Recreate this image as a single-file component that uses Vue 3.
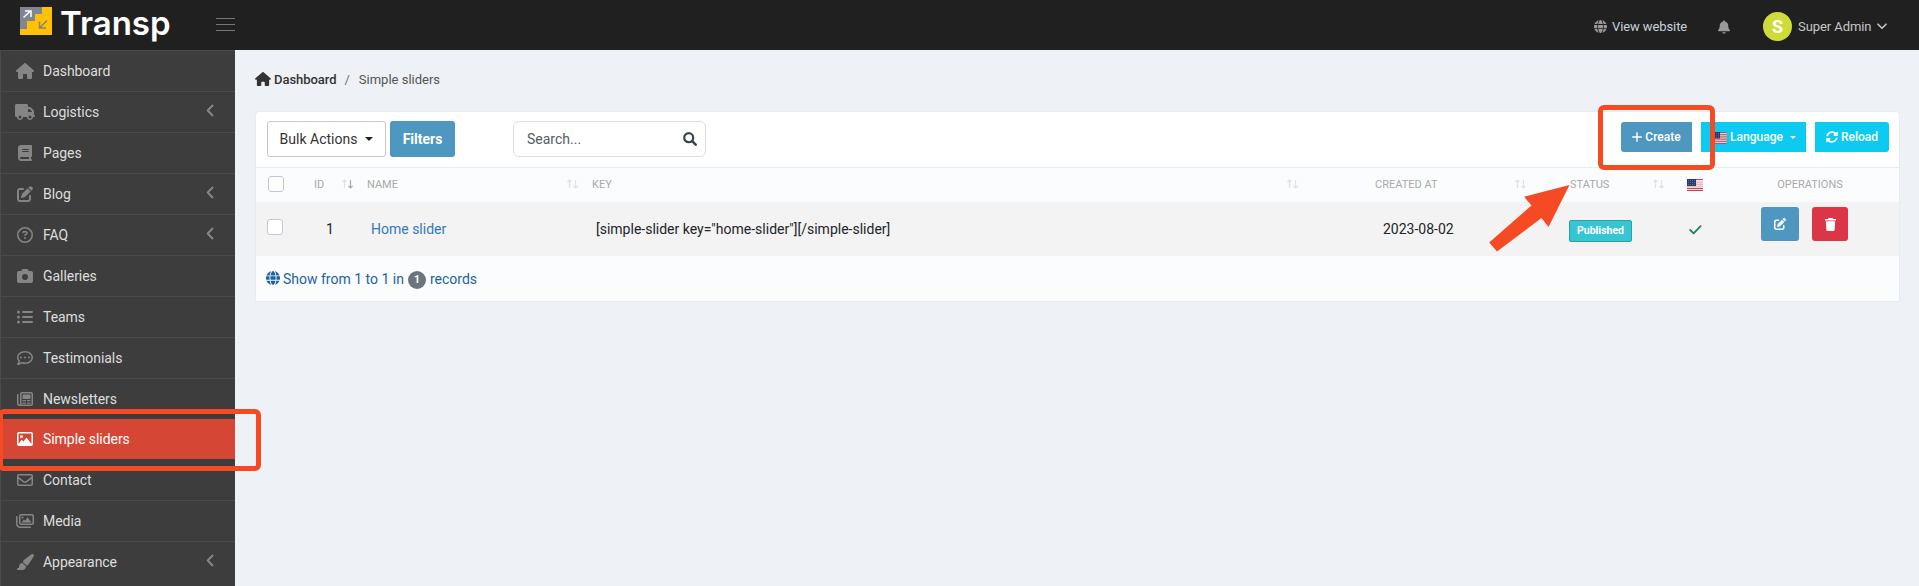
<script setup>
const icons = {
  house: [576, 'M575.8 255.5c0 18-15 32.1-32 32.1h-32l.7 160.2c0 2.7-.2 5.4-.5 8.1V472c0 22.1-17.9 40-40 40H392c-22.1 0-40-17.9-40-40V384c0-17.7-14.3-32-32-32H256c-17.7 0-32 14.3-32 32v88c0 22.1-17.9 40-40 40H104c-22.1 0-40-17.9-40-40V287.6H32c-18 0-32-14-32-32.1c0-9 3-17 10-24L266.4 8c7-7 15-8 22-8s15 2 21 7L564.8 231.5c8 7 12 15 11 24z'],
  truck: [640, 'M48 0C21.5 0 0 21.5 0 48V368c0 26.5 21.5 48 48 48H64c0 53 43 96 96 96s96-43 96-96H384c0 53 43 96 96 96s96-43 96-96h32c17.7 0 32-14.3 32-32s-14.3-32-32-32V237.3c0-17-6.7-33.3-18.7-45.3L512 114.7c-12-12-28.3-18.7-45.3-18.7H416V48c0-26.5-21.5-48-48-48H48zM416 160h50.7L544 237.3V256H416V160zM112 416a48 48 0 1 1 96 0 48 48 0 1 1 -96 0zm368-48a48 48 0 1 1 0 96 48 48 0 1 1 0-96z'],
  book: [448, 'M96 0C43 0 0 43 0 96V416c0 53 43 96 96 96H416c17.7 0 32-14.3 32-32s-14.3-32-32-32V384c17.7 0 32-14.3 32-32V32c0-17.7-14.3-32-32-32H96zm0 384H352v64H96c-17.7 0-32-14.3-32-32s14.3-32 32-32zm32-240c0-8.8 7.2-16 16-16H336c8.8 0 16 7.2 16 16s-7.2 16-16 16H144c-8.8 0-16-7.2-16-16zm16 48H336c8.8 0 16 7.2 16 16s-7.2 16-16 16H144c-8.8 0-16-7.2-16-16s7.2-16 16-16z'],
  edit: [512, 'M471.6 21.7c-21.9-21.9-57.3-21.9-79.2 0L362.3 51.7l97.9 97.9 30.1-30.1c21.9-21.9 21.9-57.3 0-79.2L471.6 21.7zm-299.2 220c-6.1 6.1-10.8 13.6-13.5 21.9l-29.6 88.8c-2.9 8.6-.6 18.1 5.8 24.6s15.9 8.7 24.6 5.8l88.8-29.6c8.2-2.7 15.7-7.4 21.9-13.5L437.7 172.3 339.7 74.3 172.4 241.7zM96 64C43 64 0 107 0 160V416c0 53 43 96 96 96H352c53 0 96-43 96-96V320c0-17.7-14.3-32-32-32s-32 14.3-32 32v96c0 17.7-14.3 32-32 32H96c-17.7 0-32-14.3-32-32V160c0-17.7 14.3-32 32-32h96c17.7 0 32-14.3 32-32s-14.3-32-32-32H96z'],
  question: [512, 'M464 256A208 208 0 1 0 48 256a208 208 0 1 0 416 0zM0 256a256 256 0 1 1 512 0A256 256 0 1 1 0 256zm169.8-90.7c7.9-22.3 29.1-37.3 52.8-37.3h58.3c34.9 0 63.1 28.3 63.1 63.1c0 22.6-12.1 43.5-31.7 54.8L280 264.4c-.2 13-10.9 23.6-24 23.6c-13.3 0-24-10.7-24-24V250.5c0-8.6 4.6-16.5 12.1-20.8l44.3-25.4c4.7-2.7 7.6-7.7 7.6-13.1c0-8.4-6.8-15.1-15.1-15.1H222.6c-3.4 0-6.4 2.1-7.5 5.3l-.4 1.2c-4.4 12.5-18.2 19-30.6 14.6s-19-18.2-14.6-30.6l.4-1.2zM224 352a32 32 0 1 1 64 0 32 32 0 1 1 -64 0z'],
  camera: [512, 'M149.1 64.8L138.7 96H64C28.7 96 0 124.7 0 160V416c0 35.3 28.7 64 64 64H448c35.3 0 64-28.7 64-64V160c0-35.3-28.7-64-64-64H373.3L362.9 64.8C356.4 45.2 338.1 32 317.4 32H194.6c-20.7 0-39 13.2-45.5 32.8zM256 192a96 96 0 1 1 0 192 96 96 0 1 1 0-192z'],
  list: [512, 'M48 48a48 48 0 1 1 0 96 48 48 0 1 1 0-96zm0 160a48 48 0 1 1 0 96 48 48 0 1 1 0-96zm0 160a48 48 0 1 1 0 96 48 48 0 1 1 0-96zM192 64H480a32 32 0 0 1 0 64H192a32 32 0 0 1 0-64zm0 160H480a32 32 0 0 1 0 64H192a32 32 0 0 1 0-64zm0 160H480a32 32 0 0 1 0 64H192a32 32 0 0 1 0-64z'],
  comment: [512, 'M256 32C397.4 32 512 125.1 512 240S397.4 448 256 448c-38 0-75-7-107-20C112 456 65 480 24 480C2 480-8 454 8 438c20-21 36-50 41-80C18 324 0 284 0 240C0 125.1 114.6 32 256 32zM256 80C141 80 48 152 48 240c0 35 15 65 38 90c14 15 13 29 8 46c-4 16-10 31-18 45c25-9 43-21 58-32c8-6 18-6 27-3c27 10 60 14 95 14c115 0 208-72 208-160S371 80 256 80zM128 208a32 32 0 1 1 0 64 32 32 0 1 1 0-64zm128 0a32 32 0 1 1 0 64 32 32 0 1 1 0-64zm128 0a32 32 0 1 1 0 64 32 32 0 1 1 0-64z', 'evenodd'],
  news: [512, 'M160 32H448C483 32 512 61 512 96V416C512 451 483 480 448 480H72C32 480 0 448 0 408V120A24 24 0 0 1 48 120V408A24 24 0 0 0 96 408V96C96 61 125 32 160 32zM160 80C151 80 144 87 144 96V408C144 416 143 424 140 432H448C457 432 464 425 464 416V96C464 87 457 80 448 80zM200 112H408A24 24 0 0 1 432 136V232A24 24 0 0 1 408 256H200A24 24 0 0 1 176 232V136A24 24 0 0 1 200 112zM176 288H288V328H176zM320 288H432V328H320zM176 368H288V408H176zM320 368H432V408H320z', 'evenodd'],
  image: [512, 'M448 80c8.8 0 16 7.2 16 16V415.8l-5-6.5-136-176c-4.5-5.9-11.6-9.3-19-9.3s-14.4 3.4-19 9.3L202 340.7l-30.5-42.7C167 291.7 159.8 288 152 288s-15 3.7-19.5 10.1l-80 112L48 416.3V96c0-8.8 7.2-16 16-16H448zM64 32C28.7 32 0 60.7 0 96V416c0 35.3 28.7 64 64 64H448c35.3 0 64-28.7 64-64V96c0-35.3-28.7-64-64-64H64zm80 192a48 48 0 1 0 0-96 48 48 0 1 0 0 96z'],
  envelope: [512, 'M64 112c-8.8 0-16 7.2-16 16v22.1L220.5 291.7c20.7 17 50.4 17 71.1 0L464 150.1V128c0-8.8-7.2-16-16-16H64zM48 212.2V384c0 8.8 7.2 16 16 16H448c8.8 0 16-7.2 16-16V212.2L322 328.8c-38.4 31.5-93.7 31.5-132 0L48 212.2zM0 128C0 92.7 28.7 64 64 64H448c35.3 0 64 28.7 64 64V384c0 35.3-28.7 64-64 64H64c-35.3 0-64-28.7-64-64V128z'],
  images: [576, 'M160 32H512C547 32 576 61 576 96V320C576 355 547 384 512 384H160C125 384 96 355 96 320V96C96 61 125 32 160 32zM160 80C151 80 144 87 144 96V320C144 329 151 336 160 336H512C521 336 528 329 528 320V96C528 87 521 80 512 80zM208 112A32 32 0 1 1 208 176A32 32 0 1 1 208 112zM176 304L254 208L294 248L368 136L496 304zM24 96A24 24 0 0 1 48 120V344C48 393 87 432 136 432H456A24 24 0 0 1 456 480H136C61 480 0 419 0 344V120A24 24 0 0 1 24 96z', 'evenodd'],
  brush: [576, 'M339.3 367.1c27.3-3.9 51.9-19.4 67.2-42.9L568.2 74.1c12.6-19.5 9.4-45.3-7.6-61.2S517.7-4.4 499.1 9.6L262.4 187.2c-24 18-38.2 46.1-38.4 76.1L339.3 367.1zm-19.6 25.4l-116-104.4C143.9 290.3 96 339.6 96 400c0 3.9 .2 7.8 .6 11.6C98.4 429.1 86.4 448 68.8 448H64c-17.7 0-32 14.3-32 32s14.3 32 32 32H208c61.9 0 112-50.1 112-112c0-2.5-.1-5-.2-7.5z'],
  globe: [512, 'M352 256c0 22.2-1.2 43.6-3.3 64H163.3c-2.2-20.4-3.3-41.8-3.3-64s1.2-43.6 3.3-64H348.7c2.2 20.4 3.3 41.8 3.3 64zm28.8-64H503.9c5.3 20.5 8.1 41.9 8.1 64s-2.8 43.5-8.1 64H380.8c2.1-20.6 3.2-42 3.2-64s-1.1-43.4-3.2-64zm112.6-32H376.7c-10-63.9-29.8-117.4-55.3-151.6c78.3 20.7 142 77.5 171.9 151.6zm-149.1 0H167.7c6.1-36.4 15.5-68.6 27-94.7c10.5-23.6 22.2-40.7 33.5-51.5C239.4 3.2 248.7 0 256 0s16.6 3.2 27.8 13.8c11.3 10.8 23 27.9 33.5 51.5c11.6 26 20.9 58.2 27 94.7zm-209 0H18.6C48.6 85.9 112.2 29.1 190.6 8.4C165.1 42.6 145.3 96.1 135.3 160zM8.1 192H131.2c-2.1 20.6-3.2 42-3.2 64s1.1 43.4 3.2 64H8.1C2.8 299.5 0 278.1 0 256s2.8-43.5 8.1-64zM194.7 446.6c-11.6-26-20.9-58.2-27-94.6H344.3c-6.1 36.4-15.5 68.6-27 94.6c-10.5 23.6-22.2 40.7-33.5 51.5C272.6 508.8 263.3 512 256 512s-16.6-3.2-27.8-13.8c-11.3-10.8-23-27.9-33.5-51.5zM135.3 352c10 63.9 29.8 117.4 55.3 151.6C112.2 482.9 48.6 426.1 18.6 352H135.3zm358.1 0c-30 74.1-93.6 130.9-171.9 151.6c25.5-34.2 45.2-87.7 55.3-151.6H493.4z']
}
const menu = [
  ['Dashboard', 'house'], ['Logistics', 'truck', true], ['Pages', 'book'], ['Blog', 'edit', true],
  ['FAQ', 'question', true], ['Galleries', 'camera'], ['Teams', 'list'], ['Testimonials', 'comment'],
  ['Newsletters', 'news'], ['Simple sliders', 'image'], ['Contact', 'envelope'], ['Media', 'images'],
  ['Appearance', 'brush', true]
]
const columns = [
  { key: 'id', label: 'ID' },
  { key: 'name', label: 'NAME' },
  { key: 'code', label: 'KEY' },
  { key: 'created', label: 'CREATED AT' },
  { key: 'status', label: 'STATUS' }
]
const stripes = [0, 2, 4, 6, 8, 10, 12]
</script>

<template>
  <div class="app">
    <header class="topbar">
      <div class="brand">
        <svg class="mark" width="32" height="28" viewBox="0 0 32 28">
          <rect width="32" height="28" fill="#ffc107" />
          <path d="M0 0H22V7H15V14H7V22H0z" fill="#808591" />
          <path d="M3.500 10.500L10.500 4M5 4H11V10" fill="none" stroke="#fff" stroke-width="1.500" />
          <path d="M27 13.500L20 20.500M19.500 14.500V21H26" fill="none" stroke="#8b8465" stroke-width="1.500" />
        </svg>
        <span class="word">Transp</span>
      </div>
      <div class="burger"><i></i><i></i><i></i></div>
      <nav class="user">
        <svg class="dim" width="13" height="13" viewBox="0 0 512 512"><path :d="icons.globe[1]" /></svg>
        <span class="site">View website</span>
        <svg class="dim bell" width="12" height="14" viewBox="0 0 448 512"><path d="M224 0c-17.700 0-32 14.300-32 32V51.200C119 66 64 130.600 64 208v18.800c0 47-17.300 92.400-48.500 127.600l-7.400 8.300c-8.400 9.400-10.400 22.900-5.300 34.400S19.400 416 32 416H416c12.600 0 24-7.400 29.200-18.900s3.100-25-5.300-34.400l-7.400-8.300C401.300 319.200 384 273.900 384 226.800V208c0-77.400-55-142-128-156.800V32c0-17.700-14.300-32-32-32zm45.300 493.300c12-12 18.700-28.300 18.700-45.300H160c0 17 6.700 33.300 18.700 45.300s28.300 18.700 45.300 18.700s33.300-6.700 45.300-18.700z" /></svg>
        <span class="avatar">S</span>
        <span class="admin">Super Admin</span>
        <svg class="down" width="10" height="7" viewBox="0 0 10 7"><path d="M1 1.200L5 5.200L9 1.200" fill="none" stroke="#c6c6c6" stroke-width="1.600" stroke-linecap="round" stroke-linejoin="round" /></svg>
      </nav>
    </header>

    <div class="body">
      <aside class="sidebar">
        <a v-for="m in menu" :key="m[0]" class="item" :class="{ active: m[0] === 'Simple sliders', after: m[0] === 'Contact' }">
          <span class="ico">
            <svg height="16" :width="icons[m[1]][0] / 32" :viewBox="`0 0 ${icons[m[1]][0]} 512`"><path :d="icons[m[1]][1]" :fill-rule="icons[m[1]][2] || 'nonzero'" /></svg>
          </span>
          <span class="label">{{ m[0] }}</span>
          <svg v-if="m[2]" class="chev" width="8" height="13" viewBox="0 0 8 13"><path d="M6.500 1.500L1.700 6.500L6.500 11.500" fill="none" stroke="#858585" stroke-width="2" stroke-linecap="round" stroke-linejoin="round" /></svg>
        </a>
      </aside>

      <main class="content">
        <div class="crumbs">
          <svg width="16" height="14" viewBox="0 0 576 512"><path :d="icons.house[1]" fill="#333" /></svg>
          <span class="home">Dashboard</span><span class="slash">/</span><span class="here">Simple sliders</span>
        </div>

        <section class="card">
          <div class="tools">
            <button class="bulk">Bulk Actions<i class="caret"></i></button>
            <button class="filters">Filters</button>
            <div class="search">
              <span>Search...</span>
              <svg width="14" height="14" viewBox="0 0 14 14"><circle cx="5.700" cy="5.700" r="4.500" fill="none" stroke="#3c4350" stroke-width="2.200" /><path d="M9.200 9.200L12.700 12.700" stroke="#3c4350" stroke-width="2.500" stroke-linecap="round" /></svg>
            </div>
            <div class="actions">
              <button class="act create">
                <svg width="10" height="10" viewBox="0 0 10 10"><path d="M5 .7V9.300M.7 5H9.300" stroke="#fff" stroke-width="1.400" stroke-linecap="round" /></svg>
                <span>Create</span>
              </button>
              <button class="act lang">
                <svg class="flag" width="16" height="12" viewBox="0 0 16 13" preserveAspectRatio="none"><rect width="16" height="13" fill="#fff" opacity=".78" /><rect v-for="y in stripes" :key="y" width="16" height="1" :y="y" fill="#c4404f" /><rect width="9" height="7" fill="#27376f" /><path d="M1 1.500H8M1 3.500H8M1 5.500H8" stroke="#8b95b8" stroke-width=".6" stroke-dasharray="1 1" /></svg>
                <span>Language</span><i class="caret small"></i>
              </button>
              <button class="act reload">
                <svg width="12" height="12" viewBox="0 0 512 512"><path fill="#fff" d="M370.720 133.280C339.458 104.008 298.888 87.962 255.848 88c-77.458.068-144.328 53.178-162.791 126.850-1.344 5.363-6.122 9.150-11.651 9.150H24.103c-7.498 0-13.194-6.807-11.807-14.176C33.933 94.924 134.813 8 256 8c66.448 0 126.791 26.136 171.315 68.685L463.030 40.970C478.149 25.851 504 36.559 504 57.941V192c0 13.255-10.745 24-24 24H345.941c-21.382 0-32.090-25.851-16.971-40.971l41.750-41.749zM32 296h134.059c21.382 0 32.090 25.851 16.971 40.971l-41.750 41.750c31.262 29.273 71.835 45.319 114.876 45.280 77.418-.070 144.315-53.144 162.787-126.849 1.344-5.363 6.122-9.150 11.651-9.150h57.304c7.498 0 13.194 6.807 11.807 14.176C478.067 417.076 377.187 504 256 504c-66.448 0-126.791-26.136-171.315-68.685L48.970 471.030C33.851 486.149 8 475.441 8 454.059V320c0-13.255 10.745-24 24-24z" /></svg>
                <span>Reload</span>
              </button>
            </div>
          </div>

          <div class="row head">
            <div class="c-check"><i class="box"></i></div>
            <div v-for="c in columns" :key="c.key" class="cell" :class="'h-' + c.key">
              <span>{{ c.label }}</span>
              <svg class="sort" width="11" height="10" viewBox="0 0 11 10"><path d="M2.500 9V1.500M.5 3L2.500 1L4.500 3" fill="none" stroke="#dfe1e3" stroke-width="1.200" /><path class="dn" d="M8.500 1V8.500M6.500 7L8.500 9L10.500 7" fill="none" stroke-width="1.200" /></svg>
            </div>
            <div class="c-flag"><svg width="16" height="12" viewBox="0 0 16 12"><rect width="16" height="12" fill="#f3d9dd" /><path d="M8 .5H16M0 9.500H16M0 11.500H16" stroke="#cf3f4d" /><path d="M8 3.500H16M8 5.500H16M0 7.500H16" stroke="#e9b9c0" /><rect width="9" height="7" fill="#27376f" /><path d="M1 1.500H8M1 3.500H8M1 5.500H8" stroke="#8b95b8" stroke-width=".6" stroke-dasharray="1 1" /></svg></div>
            <div class="c-ops">OPERATIONS</div>
          </div>

          <div class="row data">
            <div class="c-check"><i class="box"></i></div>
            <div class="d-id">1</div>
            <div class="d-name">Home slider</div>
            <div class="d-code">[simple-slider key="home-slider"][/simple-slider]</div>
            <div class="d-created">2023-08-02</div>
            <div class="d-status"><span class="badge">Published</span></div>
            <div class="c-flag"><svg class="tick" width="13" height="10" viewBox="0 0 13 10"><path d="M1.200 5L4.600 8.400L11.600 1.200" fill="none" stroke="#198754" stroke-width="1.800" stroke-linecap="round" stroke-linejoin="round" /></svg></div>
            <div class="c-ops btns">
              <button class="op edit"><svg width="12" height="12" viewBox="0 0 512 512"><path :d="icons.edit[1]" fill="#fff" /></svg></button>
              <button class="op del"><svg width="11" height="13" viewBox="0 0 11 13"><path d="M3.600 0H7.400L8 1H11V2.500H0V1H3zM.8 3.300H10.200L9.600 12Q9.500 13 8.500 13H2.500Q1.500 13 1.400 12z" fill="#fff" /></svg></button>
            </div>
          </div>

          <div class="foot">
            <svg width="14" height="14" viewBox="0 0 512 512"><path :d="icons.globe[1]" fill="#1c639f" /></svg>
            <span>Show from 1 to 1 in</span><b>1</b><span>records</span>
          </div>
        </section>
      </main>
    </div>

    <div class="mark-box side"></div>
    <div class="mark-box top"></div>
    <svg class="arrow" width="82" height="70" viewBox="0 0 82 70"><path d="M81.500 1L36 12.800L43.500 21.500L1.200 58.500L9 67.500L53.500 34L60.500 43z" fill="#f64a25" /></svg>
  </div>
</template>

<style>
html, body { margin: 0; overflow: hidden; }
</style>

<style scoped>
.app { position: relative; width: 1919px; height: 586px; overflow: hidden; display: flex; flex-direction: column; background: #eef1f6; font-family: Roboto, "Liberation Sans", sans-serif; font-size: 14px; color: #212529; }
.app * { box-sizing: border-box; }
svg { display: block; flex: none; }
span { white-space: nowrap; }
button { border: 0; margin: 0; padding: 0; font: inherit; display: flex; align-items: center; justify-content: center; flex: none; }
.topbar { height: 50px; flex: none; background: #202020; display: flex; }
.brand { width: 216px; padding: 7px 0 0 20px; display: flex; align-items: flex-start; }
.word { font: 600 33px/40px Inter, sans-serif; color: #fff; margin: -4px 0 0 8px; }
.burger { width: 19px; height: 13px; margin-top: 18px; display: flex; flex-direction: column; justify-content: space-between; }
.burger i { height: 1px; background: #757575; }
.user { margin-left: auto; padding: 3px 32px 0 0; height: 50px; display: flex; align-items: center; font-size: 13px; }
.dim { fill: #999; }
.site { color: #c9d1dc; margin: 0 32px 0 5px; width: 74px; letter-spacing: -.1px; }
.bell { margin-right: 33px; }
.avatar { width: 29px; height: 29px; border-radius: 50%; background: #cddc39; color: #fff; font-weight: 700; font-size: 18px; line-height: 29px; text-align: center; }
.admin { color: #c6c6c6; margin: 0 7px 0 6px; width: 72px; letter-spacing: -.08px; }
.body { display: flex; flex: 1; min-height: 0; }
.sidebar { width: 235px; flex: none; background: #3d3d3d; border-left: 1px solid #4b4b4b; overflow: hidden; }
.item { height: 41px; border-top: 1px solid #4a4a4a; display: flex; align-items: center; padding: 0 20px 0 12px; color: #dedede; }
.ico { width: 24px; display: flex; justify-content: center; margin-right: 6px; fill: #858585; }
.ico svg { margin-top: -1px; }
.label { line-height: 20px; letter-spacing: -.05px; }
.chev { margin: -4px 1px 0 auto; }
.item.active { height: 40px; border: 0; background: #d64635; color: #fff; }
.active .ico { fill: #fff; }
.item.after { border-color: #3d3d3d; }
.content { flex: 1; padding: 21px 20px 0; }
.crumbs { height: 16px; display: flex; align-items: center; font-size: 13px; margin-bottom: 24px; }
.home { color: #333; margin-left: 3px; font-weight: 500; letter-spacing: -.05px; }
.slash { color: #6c757d; margin: 0 9px 0 8px; }
.here { color: #555; }
.card { width: 1645px; height: 191px; background: #fff; border: 1px solid #e7ecf1; border-radius: 4px 4px 0 0; }
.tools { height: 55px; display: flex; padding: 9px 10px 0 11px; align-items: flex-start; }
.bulk { width: 119px; height: 36px; border: 1px solid #c4c6c8; border-radius: 3px; background: #fff; color: #333; }
.caret { border: 4px solid transparent; border-top-color: #222; border-bottom: 0; margin-left: 8px; }
.caret.small { border-width: 3px 3px 0; border-top-color: #fff; margin-left: 6px; }
.filters { width: 65px; height: 36px; margin-left: 4px; border-radius: 3px; background: #4d97c1; color: #fff; font-weight: 700; }
.search { width: 193px; height: 36px; border: 1px solid #dcdfe2; border-radius: 6px; margin-left: 58px; display: flex; align-items: center; justify-content: space-between; padding: 0 8px 0 13px; color: #555c63; }
.actions { display: flex; gap: 9px; margin-left: auto; padding-top: 1px; }
.act { height: 30px; background: #0dcaf0; color: #fff; font-size: 12px; font-weight: 500; gap: 3px; }
.create { width: 71px; background: #4d97c1; border-radius: 3px 0 0 3px; }
.lang { width: 105px; }
.lang .flag { margin-top: 2px; }
.lang .caret { margin-left: 4px; }
.reload { width: 74px; border-radius: 0 3px 3px 0; }
.row { display: grid; grid-template-columns: 48px 53px 225px 720px 228px 138px 53px 178px; }
.head { height: 35px; border-top: 1px solid #e9ecef; background: #fbfcfe; color: #a9a9a9; font-size: 11px; align-items: center; padding-bottom: 1px; }
.box { display: block; width: 16px; height: 16px; border: 1px solid #c0c9d6; border-radius: 3px; background: #fff; margin-left: 12px; margin-top: -2px; }
.cell { display: flex; align-items: center; justify-content: space-between; padding: 0 4px 0 10px; }
.sort { margin-top: -2px; }
.dn { stroke: #dfe1e3; }
.h-id .dn { stroke: #aaa; }
.h-created { padding-left: 73px; }
.h-status { padding-left: 40px; }
.c-flag { padding-left: 19px; padding-top: 1px; }
.c-ops { text-align: center; }
.data { height: 54px; background: #f3f3f3; align-items: center; }
.data .box { margin-left: 11px; margin-top: -4px; }
.d-id { padding-left: 22px; }
.d-name { padding-left: 14px; color: #337ab7; }
.d-code { padding-left: 14px; }
.d-created { padding-left: 81px; }
.d-status { padding-left: 39px; }
.badge { display: block; width: 63px; height: 22px; line-height: 19px; margin-top: 3px; background: #36c6d3; border: 1px solid #2ea0ab; border-radius: 2px; color: #fff; font-size: 10.5px; font-weight: 700; text-align: center; }
.tick { margin-left: 2px; }
.btns { display: flex; align-self: start; padding: 5px 0 0 40px; gap: 13px; }
.op { height: 34px; border-radius: 3px; background: #4d97c1; }
.edit { width: 38px; }
.del { width: 36px; background: #dc3545; }
.foot { height: 45px; background: #fbfcfe; display: flex; align-items: center; padding-left: 10px; color: #1c639f; }
.foot svg { margin-right: 3px; margin-top: -1px; }
.foot b { width: 18px; height: 18px; border-radius: 50%; background: #6c757d; color: #fff; font-size: 10.5px; line-height: 17px; text-align: center; margin: 2px 4px 0; }
.mark-box { position: absolute; border: 5px solid #f64a25; border-radius: 6px; }
.side { left: -2px; top: 409px; width: 263px; height: 62px; }
.top { left: 1598px; top: 105px; width: 117px; height: 65px; }
.arrow { position: absolute; left: 1488px; top: 184px; }
</style>
